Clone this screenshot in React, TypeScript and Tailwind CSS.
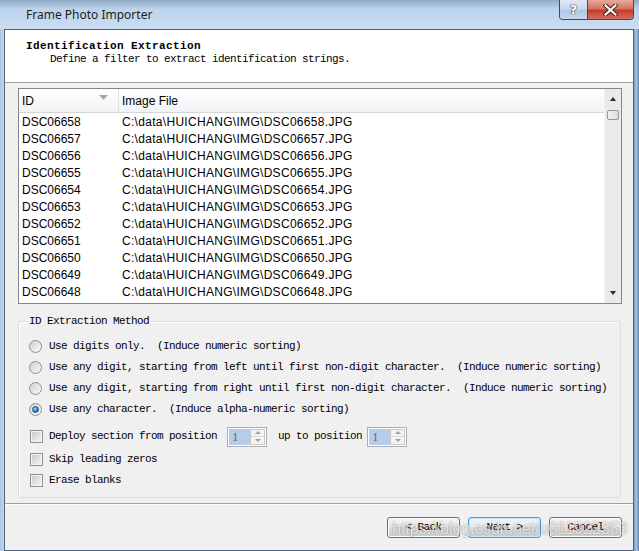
import React from "react";

const mono = "font-['Liberation_Mono','DejaVu_Sans_Mono',monospace] text-[11px] tracking-[-0.6px] text-black";

const files = Array.from({ length: 11 }, (_, i) => `DSC0${6658 - i}`);

function Radio({ checked = false }: { checked?: boolean }) {
  return (
    <span className="flex h-[13px] w-[13px] shrink-0 items-center justify-center rounded-full border border-[#8e8f8f] bg-[linear-gradient(135deg,#d4d4d4,#fbfbfb)]">
      {checked ? (
        <span className="h-[7px] w-[7px] rounded-full border border-[#1b4f85] bg-[radial-gradient(circle_at_40%_35%,#b4e6ff,#1e7cd0_55%,#0b4a8a)]" />
      ) : (
        <span className="h-[9px] w-[9px] rounded-full bg-[linear-gradient(135deg,#cdd0d4,#f8f8f8)]" />
      )}
    </span>
  );
}

function Checkbox() {
  return (
    <span className="flex h-[13px] w-[13px] shrink-0 items-center justify-center border border-[#8e8f8f] bg-[#f4f4f4]">
      <span className="h-[9px] w-[9px] bg-[linear-gradient(135deg,#c8cbd0,#f3f3f3)]" />
    </span>
  );
}

function Spinner() {
  return (
    <div className="flex h-[20px] w-[40px] shrink-0 border border-[#abadb3] bg-white p-px">
      <div className="flex flex-1 items-center bg-[#b3cdea] pl-[3px] font-['Liberation_Serif',serif] text-[13px] text-[#6a6a6a]">1</div>
      <div className="flex w-[15px] flex-col border border-[#c9c9c9] bg-[#f3f3f3]">
        <div className="flex flex-1 items-center justify-center border-b border-[#d8d8d8]">
          <span className="h-0 w-0 border-x-[3px] border-b-[3px] border-x-transparent border-b-[#a0a0a0]" />
        </div>
        <div className="flex flex-1 items-center justify-center">
          <span className="h-0 w-0 border-x-[3px] border-t-[3px] border-x-transparent border-t-[#a0a0a0]" />
        </div>
      </div>
    </div>
  );
}

function DialogButton({ label, isDefault = false }: { label: string; isDefault?: boolean }) {
  return (
    <button
      className={
        isDefault
          ? `h-[21px] w-[73px] rounded-[3px] border border-[#3c9fd9] bg-[linear-gradient(#f2f2f2_0%,#ebebeb_45%,#dddddd_50%,#cfcfcf_100%)] shadow-[inset_0_0_0_1px_#c4e9fb] ${mono}`
          : `h-[21px] w-[73px] rounded-[3px] border border-[#707070] bg-[linear-gradient(#f2f2f2_0%,#ebebeb_45%,#dddddd_50%,#cfcfcf_100%)] shadow-[inset_0_0_0_1px_#fbfbfb] ${mono}`
      }
    >
      {label}
    </button>
  );
}

function Scrollbar() {
  return (
    <div className="flex w-[17px] shrink-0 flex-col border-l border-[#f3f3f3] bg-[#eaeaea]">
      <div className="flex h-[21px] justify-center pt-[8px]">
        <span className="h-0 w-0 border-x-[3.5px] border-b-[4px] border-x-transparent border-b-[#2a2a2a]" />
      </div>
      <div className="mx-[2px] h-[10px] rounded-[2px] border border-[#979797] bg-[linear-gradient(90deg,#f2f2f2,#dcdcdc)]" />
      <div className="flex-1" />
      <div className="flex h-[21px] justify-center pt-[9px]">
        <span className="h-0 w-0 border-x-[3.5px] border-t-[4px] border-x-transparent border-t-[#2a2a2a]" />
      </div>
    </div>
  );
}

export default function App() {
  const listFont = "font-['Liberation_Sans',Arial,sans-serif] text-[12px] text-black";

  return (
    <div className="relative flex h-[551px] w-[639px] flex-col overflow-hidden bg-[linear-gradient(180deg,#8fa9c6_0px,#bcd3eb_9px,#cbdef2_29px,#bad2eb_100%)]">
      {/* title bar */}
      <div className="flex h-[29px] shrink-0 items-start">
        <span className="ml-[26px] mt-[6px] font-['Noto_Sans','Open_Sans',sans-serif] text-[12px] leading-[17px] text-[#1e1e1e]">
          Frame Photo Importer
        </span>
        <div className="flex-1" />
        <div className="mr-[5px] flex h-[20px] overflow-hidden rounded-b-[4px] border border-t-0 border-[#3b4b60]">
          <div className="flex w-[28px] items-center justify-center border-r border-[#3b4b60] bg-[linear-gradient(#dfe9f5_0%,#c4d5ea_50%,#aec4de_51%,#c6d8ec_100%)] font-['DejaVu_Sans',sans-serif] text-[13px] font-bold leading-none text-white [text-shadow:0_0_1px_#2e3e55,0_0_1px_#2e3e55,0_0_1px_#2e3e55]">
            ?
          </div>
          <div className="flex w-[45px] items-center justify-center bg-[linear-gradient(#e9a99c_0%,#d47563_45%,#c43c27_55%,#d3705e_100%)]">
            <svg width="15" height="12" viewBox="0 0 15 12">
              <path d="M2.5 1.5 L12.5 10.5 M12.5 1.5 L2.5 10.5" stroke="#4a1c16" strokeWidth="4.2" strokeLinecap="square" />
              <path d="M2.5 1.5 L12.5 10.5 M12.5 1.5 L2.5 10.5" stroke="#ffffff" strokeWidth="2.2" strokeLinecap="square" />
            </svg>
          </div>
        </div>
      </div>

      {/* frame + client */}
      <div className="flex flex-1">
        <div className="w-[4px] shrink-0 bg-[linear-gradient(90deg,#a9c4e2,#c3d7ee)]" />
        <div className="flex w-[630px] flex-col border border-[#4f6379] bg-[#f0f0f0]">
          {/* header */}
          <div className="h-[53px] shrink-0 border-b border-[#a0a0a0] bg-white pl-[21px] pt-[10px]">
            <div className={`${mono} font-bold leading-[13px] tracking-[0.4px]`}>Identification Extraction</div>
            <div className={`${mono} pl-[24px] leading-[13px]`}>Define a filter to extract identification strings.</div>
          </div>

          {/* list */}
          <div className="ml-[13px] mt-[5px] flex h-[216px] w-[604px] shrink-0 border border-[#828790] bg-white">
            <div className="flex min-w-0 flex-1 flex-col">
              <div className={`flex h-[24px] shrink-0 border-b border-[#d5d5d5] bg-[linear-gradient(#ffffff,#f2f3f5)] ${listFont}`}>
                <div className="relative flex w-[100px] items-center border-r border-[#e3e3e3] pl-[3px]">
                  ID
                  <svg className="absolute left-[80px] top-[6px]" width="9" height="5" viewBox="0 0 9 5">
                    <path d="M0 0 H9 L4.5 5 Z" fill="#a3a9b1" />
                  </svg>
                </div>
                <div className="flex items-center pl-[3px]">Image File</div>
              </div>
              {files.map((id) => (
                <div key={id} className={`flex h-[17px] shrink-0 items-center pt-px ${listFont}`}>
                  <span className="w-[100px] pl-[3px]">{id}</span>
                  <span className="pl-[3px] tracking-[0.3px]">{`C:\\data\\HUICHANG\\IMG\\${id}.JPG`}</span>
                </div>
              ))}
            </div>
            <Scrollbar />
          </div>

          {/* group box */}
          <div className="relative ml-[13px] mt-[17px] h-[177px] w-[603px] shrink-0 rounded-[3px] border border-[#d5dfe5] pl-[10px] pt-[14px] shadow-[inset_1px_1px_0_#ffffff]">
            <span className={`absolute -top-[7px] left-[9px] bg-[#f0f0f0] px-[1px] leading-[13px] ${mono}`}>ID Extraction Method</span>
            <div className="flex h-[21px] items-center gap-[7px]">
              <Radio />
              <span className={mono}>Use digits only.&nbsp;&nbsp;(Induce numeric sorting)</span>
            </div>
            <div className="flex h-[21px] items-center gap-[7px]">
              <Radio />
              <span className={mono}>
                Use any digit, starting from left until first non-digit character.&nbsp;&nbsp;(Induce numeric sorting)
              </span>
            </div>
            <div className="flex h-[21px] items-center gap-[7px]">
              <Radio />
              <span className={mono}>
                Use any digit, starting from right until first non-digit character.&nbsp;&nbsp;(Induce numeric sorting)
              </span>
            </div>
            <div className="flex h-[21px] items-center gap-[7px]">
              <Radio checked />
              <span className={mono}>Use any character.&nbsp;&nbsp;(Induce alpha-numeric sorting)</span>
            </div>
            <div className="ml-px mt-[6px] flex h-[21px] items-center">
              <Checkbox />
              <span className={`ml-[6px] ${mono}`}>Deploy section from position</span>
              <span className="ml-[10px]">
                <Spinner />
              </span>
              <span className={`ml-[11px] ${mono}`}>up to position</span>
              <span className="ml-[5px]">
                <Spinner />
              </span>
            </div>
            <div className="ml-px mt-[2px] flex h-[21px] items-center">
              <Checkbox />
              <span className={`ml-[6px] ${mono}`}>Skip leading zeros</span>
            </div>
            <div className="ml-px flex h-[21px] items-center">
              <Checkbox />
              <span className={`ml-[6px] ${mono}`}>Erase blanks</span>
            </div>
          </div>

          {/* footer */}
          <div className="mt-[5px] h-[2px] shrink-0 border-t border-[#a0a0a0] bg-white" />
          <div className="mr-[11px] mt-[12px] flex justify-end gap-[8px]">
            <DialogButton label="< Back" />
            <DialogButton label="Next >" isDefault />
            <DialogButton label="Cancel" />
          </div>
        </div>
        <div className="w-[5px] shrink-0 bg-[linear-gradient(90deg,#7c9cc4,#a9c3e1_50%,#5f7fa6)]" />
      </div>

      <span className="pointer-events-none absolute left-[392px] top-[517px] font-['Liberation_Sans',Arial,sans-serif] text-[16px] text-[rgba(255,255,255,0.72)] [text-shadow:0_0_2px_rgba(0,0,0,0.45)]">
        https://blog.csdn.net/u011922353
      </span>
    </div>
  );
}
